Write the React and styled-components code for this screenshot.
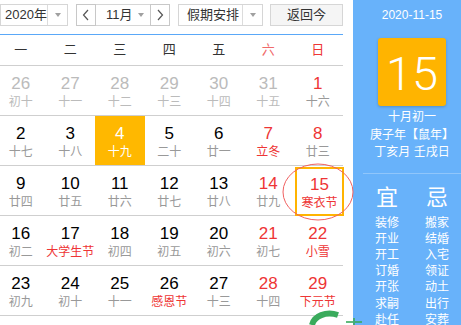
import React from "react";
import styled, { createGlobalStyle } from "styled-components";

const Global = createGlobalStyle`
  html, body { margin: 0; padding: 0; background: #fff; }
  body { font-family: "Liberation Sans", "Noto Sans CJK SC", sans-serif; }
  * { box-sizing: border-box; }
`;

const Page = styled.div`
  position: relative;
  width: 461px;
  height: 325px;
  display: flex;
  overflow: hidden;
`;

const Left = styled.div`
  width: 343px;
  margin-right: 10px;
  display: flex;
  flex-direction: column;
  & > * { flex-shrink: 0; }
`;

const TopBar = styled.div`
  height: 35px;
  padding-top: 4px;
  display: flex;
  align-items: flex-start;
  border-bottom: 1px solid #5aa8f8;
`;

const Select = styled.div`
  height: 22px;
  width: ${(p) => p.$w}px;
  margin-left: ${(p) => p.$ml || 0}px;
  display: flex;
  border: 1px solid #d6d6d6;
  border-left-width: ${(p) => (p.$joined ? 0 : 1)}px;
  border-right-width: ${(p) => (p.$joined ? 0 : 1)}px;
  background: #fff;
  font-size: 13px;
  color: #333;
  line-height: 20px;
`;

const SelText = styled.div`
  flex: 1;
  padding-left: ${(p) => p.$pl}px;
  white-space: nowrap;
  overflow: hidden;
  border-right: ${(p) => (p.$sep ? "1px solid #dcdcdc" : "none")};
`;

const Arrow = styled.div`
  width: 19px;
  display: flex;
  align-items: center;
  justify-content: center;
  &::after {
    content: "";
    border-left: 3.5px solid transparent;
    border-right: 3.5px solid transparent;
    border-top: 4px solid #a0a0a0;
  }
`;

const NavBtn = styled.div`
  width: 20px;
  height: 22px;
  border: 1px solid #c8c8c8;
  margin-left: ${(p) => p.$ml || 0}px;
  display: flex;
  align-items: center;
  justify-content: center;
  background: #fff;
`;

const TodayBtn = styled.div`
  width: 73px;
  height: 22px;
  margin-left: 7px;
  border: 1px solid #d6d6d6;
  background: #f5f5f5;
  font-size: 13px;
  color: #333;
  line-height: 20px;
  text-align: center;
`;

const WeekRow = styled.div`
  height: 31px;
  border-bottom: 1px solid #cfcfcf;
  display: grid;
  grid-template-columns: repeat(7, 49.5px);
  margin-left: -4px;
  width: 347px;
  align-items: center;
  padding-bottom: 1px;
`;

const WeekLabel = styled.div`
  text-align: center;
  font-size: 13px;
  color: ${(p) => p.$c};
  line-height: 16px;
`;

const Row = styled.div`
  height: 50px;
  border-bottom: 1px solid #cfcfcf;
`;

const RowGrid = styled.div`
  display: grid;
  grid-template-columns: repeat(7, 49.5px);
  margin-left: -4px;
  height: 49px;
`;

const Cell = styled.div`
  height: 49px;
  display: flex;
  flex-direction: column;
  align-items: center;
  padding-top: ${(p) => (p.$sel ? 5 : 7)}px;
  background: ${(p) => (p.$today ? "#ffb800" : "transparent")};
  border: ${(p) => (p.$sel ? "2px solid #ffb400" : "none")};
  margin-top: ${(p) => (p.$sel ? 1 : 0)}px;
  margin-left: ${(p) => (p.$sel ? 2 : 0)}px;
  width: ${(p) => (p.$sel ? "49px" : "auto")};
`;

const Num = styled.div`
  font-size: 17px;
  line-height: 22px;
  color: ${(p) => p.$c};
`;

const Lunar = styled.div`
  font-size: 12px;
  line-height: 14px;
  color: ${(p) => p.$c};
  white-space: nowrap;
`;

const Panel = styled.aside`
  width: 108px;
  height: 325px;
  background: #68b2fa;
  padding: 7px 0 0 10px;
  color: #fff;
  display: flex;
  flex-direction: column;
  align-items: center;
  overflow: hidden;
  & > * { flex-shrink: 0; }
`;

const DateText = styled.div`
  font-size: 12px;
  line-height: 16px;
`;

const BigDay = styled.div`
  margin-top: 15px;
  width: 68px;
  height: 68px;
  border-radius: 3px;
  background: #ffb400;
  box-shadow: 0 1px 3px rgba(0, 0, 0, 0.2);
  display: flex;
  align-items: center;
  justify-content: center;
  font-family: Roboto, "Liberation Sans", sans-serif;
  font-weight: 300;
  font-size: 47px;
  line-height: 1;
  padding-top: 2px;
`;

const InfoLines = styled.div`
  margin-top: 3px;
  font-size: 12px;
  line-height: 17.5px;
  text-align: center;
  white-space: nowrap;
`;

const Sep = styled.div`
  align-self: stretch;
  height: 1px;
  background: #90c6fb;
  margin-top: 11px;
`;

const YiJi = styled.div`
  display: grid;
  grid-template-columns: 50px 50px;
  margin-top: 11px;
`;

const YiJiHead = styled.div`
  font-size: 22px;
  line-height: 26px;
  text-align: center;
  margin-bottom: 4px;
`;

const YiJiItem = styled.div`
  font-size: 12px;
  line-height: 16.2px;
  text-align: center;
`;

const Overlay = styled.svg`
  position: absolute;
  left: ${(p) => p.$x}px;
  top: ${(p) => p.$y}px;
  pointer-events: none;
`;

const BLACK = "#000";
const GRAY = "#bbb";
const LGRAY = "#999";
const RED = "#ee3535";

const rows = [
  [
    ["26", "初十", GRAY, GRAY],
    ["27", "十一", GRAY, GRAY],
    ["28", "十二", GRAY, GRAY],
    ["29", "十三", GRAY, GRAY],
    ["30", "十四", GRAY, GRAY],
    ["31", "十五", GRAY, GRAY],
    ["1", "十六", RED, LGRAY],
  ],
  [
    ["2", "十七", BLACK, LGRAY],
    ["3", "十八", BLACK, LGRAY],
    ["4", "十九", "#fff", "#fff", "today"],
    ["5", "二十", BLACK, LGRAY],
    ["6", "廿一", BLACK, LGRAY],
    ["7", "立冬", RED, RED],
    ["8", "廿三", RED, LGRAY],
  ],
  [
    ["9", "廿四", BLACK, LGRAY],
    ["10", "廿五", BLACK, LGRAY],
    ["11", "廿六", BLACK, LGRAY],
    ["12", "廿七", BLACK, LGRAY],
    ["13", "廿八", BLACK, LGRAY],
    ["14", "廿九", RED, LGRAY],
    ["15", "寒衣节", RED, RED, "sel"],
  ],
  [
    ["16", "初二", BLACK, LGRAY],
    ["17", "大学生节", BLACK, RED],
    ["18", "初四", BLACK, LGRAY],
    ["19", "初五", BLACK, LGRAY],
    ["20", "初六", BLACK, LGRAY],
    ["21", "初七", RED, LGRAY],
    ["22", "小雪", RED, RED],
  ],
  [
    ["23", "初九", BLACK, LGRAY],
    ["24", "初十", BLACK, LGRAY],
    ["25", "十一", BLACK, LGRAY],
    ["26", "感恩节", BLACK, RED],
    ["27", "十三", BLACK, LGRAY],
    ["28", "十四", RED, LGRAY],
    ["29", "下元节", RED, RED],
  ],
];

const weekdays = [
  ["一", "#333"],
  ["二", "#333"],
  ["三", "#333"],
  ["四", "#333"],
  ["五", "#333"],
  ["六", "#f06a6a"],
  ["日", "#ee3535"],
];

const yi = ["装修", "开业", "开工", "订婚", "开张", "求嗣", "赴任"];
const ji = ["搬家", "结婚", "入宅", "领证", "动土", "出行", "安葬"];

const Chevron = ({ dir }) => (
  <svg width="8" height="12" viewBox="0 0 8 12">
    <path
      d={dir === "left" ? "M6 1 L1.5 6 L6 11" : "M2 1 L6.5 6 L2 11"}
      fill="none"
      stroke="#555"
      strokeWidth="1.2"
    />
  </svg>
);

export default function App() {
  return (
    <>
      <Global />
      <Page>
        <Left>
          <TopBar>
            <Select $w={68}>
              <SelText $pl={4} $sep>
                2020年
              </SelText>
              <Arrow />
            </Select>
            <NavBtn $ml={8}>
              <Chevron dir="left" />
            </NavBtn>
            <Select $w={54} $joined>
              <SelText $pl={10}>11月</SelText>
              <Arrow />
            </Select>
            <NavBtn>
              <Chevron dir="right" />
            </NavBtn>
            <Select $w={85} $ml={8}>
              <SelText $pl={8} $sep>
                假期安排
              </SelText>
              <Arrow />
            </Select>
            <TodayBtn>返回今</TodayBtn>
          </TopBar>
          <WeekRow>
            {weekdays.map(([w, c]) => (
              <WeekLabel key={w} $c={c}>
                {w}
              </WeekLabel>
            ))}
          </WeekRow>
          {rows.map((r, i) => (
            <Row key={i}>
              <RowGrid>
                {r.map(([n, l, nc, lc, flag], j) => (
                  <Cell key={j} $today={flag === "today"} $sel={flag === "sel"}>
                    <Num $c={nc}>{n}</Num>
                    <Lunar $c={lc}>{l}</Lunar>
                  </Cell>
                ))}
              </RowGrid>
            </Row>
          ))}
        </Left>
        <Panel>
          <DateText>2020-11-15</DateText>
          <BigDay>15</BigDay>
          <InfoLines>
            十月初一
            <br />
            庚子年【鼠年】
            <br />
            丁亥月 壬戌日
          </InfoLines>
          <Sep />
          <YiJi>
            <YiJiHead>宜</YiJiHead>
            <YiJiHead>忌</YiJiHead>
            {yi.map((y, i) => (
              <React.Fragment key={y}>
                <YiJiItem>{y}</YiJiItem>
                <YiJiItem>{ji[i]}</YiJiItem>
              </React.Fragment>
            ))}
          </YiJi>
        </Panel>
        <Overlay $x={280} $y={160} width="80" height="64" viewBox="0 0 80 64">
          <ellipse cx="38" cy="32" rx="35" ry="28" fill="none" stroke="#f06060" strokeWidth="1" />
        </Overlay>
        <Overlay $x={290} $y={300} width="90" height="25" viewBox="0 0 90 25">
          <path d="M22 25 C24 16, 36 11, 48 15" fill="none" stroke="#3aab5c" strokeWidth="6" />
          <path d="M56 22 L72 22 M64 18 L64 25" stroke="#3aab5c" strokeWidth="2" opacity="0.8" />
        </Overlay>
      </Page>
    </>
  );
}
